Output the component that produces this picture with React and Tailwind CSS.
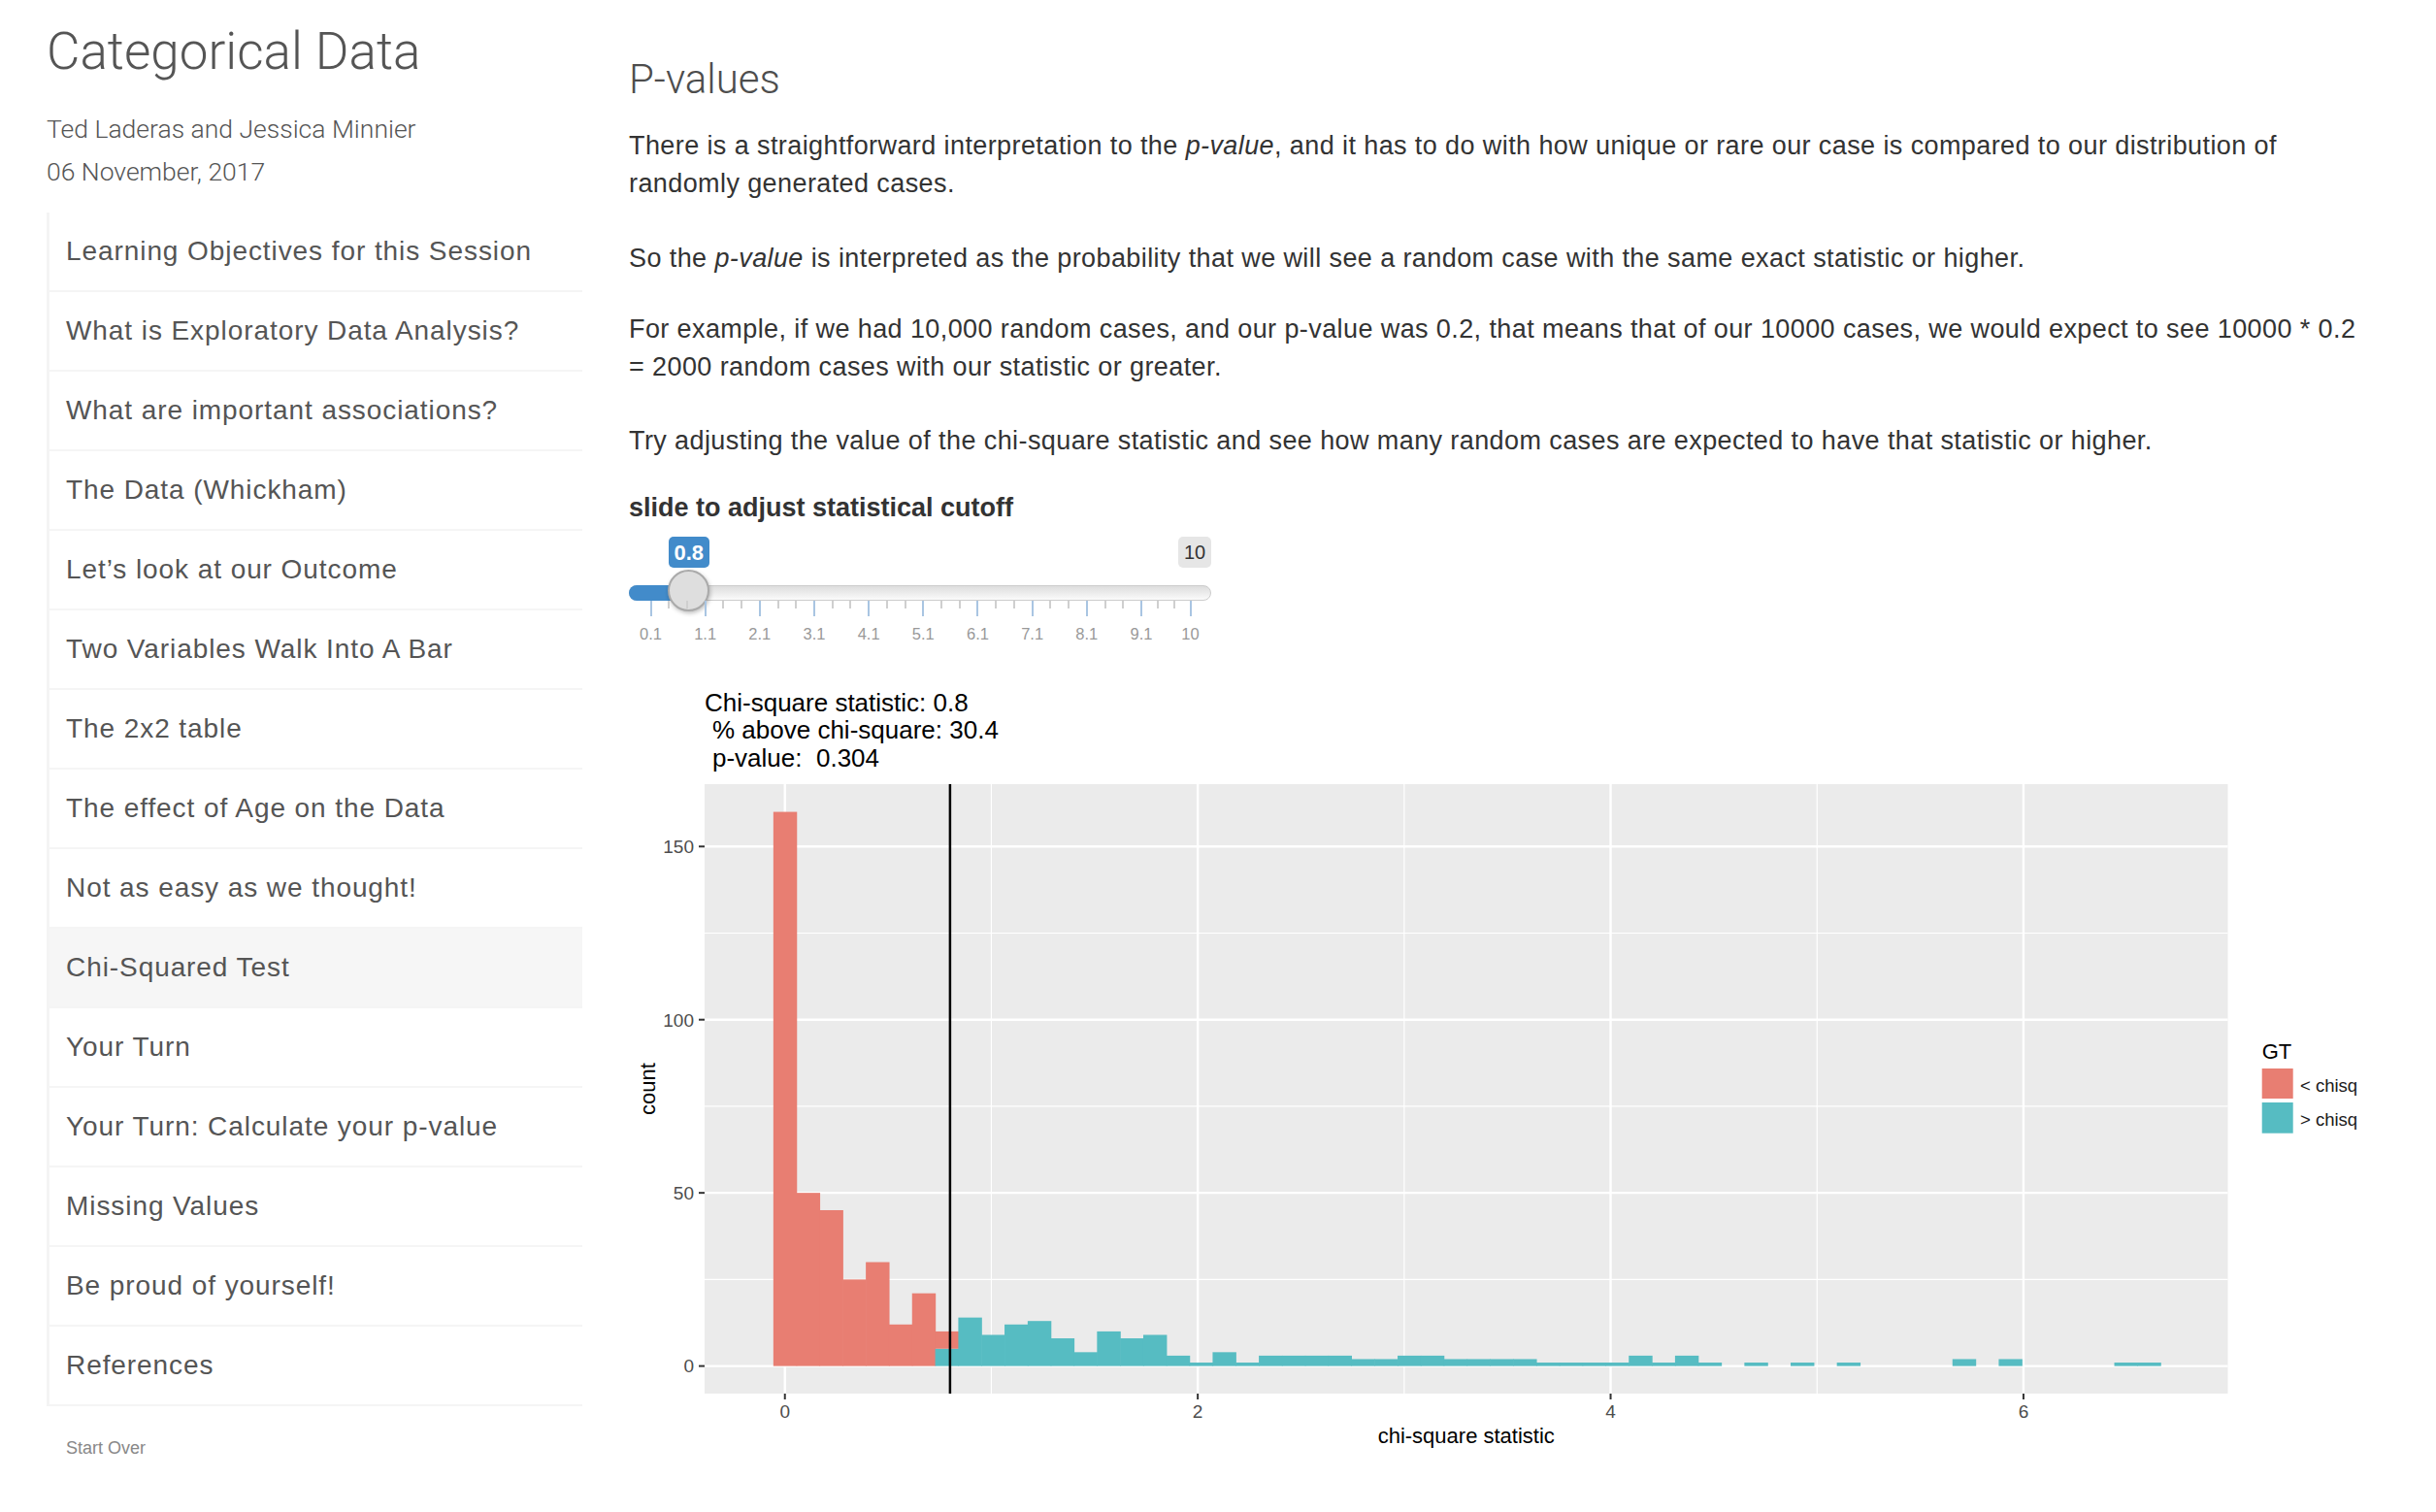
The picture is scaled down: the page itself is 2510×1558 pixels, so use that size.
const navItems = [
  'Learning Objectives for this Session',
  'What is Exploratory Data Analysis?',
  'What are important associations?',
  'The Data (Whickham)',
  'Let\u2019s look at our Outcome',
  'Two Variables Walk Into A Bar',
  'The 2x2 table',
  'The effect of Age on the Data',
  'Not as easy as we thought!',
  'Chi-Squared Test',
  'Your Turn',
  'Your Turn: Calculate your p-value',
  'Missing Values',
  'Be proud of yourself!',
  'References',
];

const activeItem = 'Chi-Squared Test';

const sans = { fontFamily: '"Liberation Sans", Arial, sans-serif' };
const light = { fontFamily: 'Roboto, "Liberation Sans", sans-serif' };

// histogram data (bin width 0.112, bins centred on k * width)
const BIN = 0.112;
const redCounts = [160, 50, 45, 25, 30, 12, 21, 5];
const tealCounts = {
  7: 5, 8: 14, 9: 9, 10: 12, 11: 13, 12: 8, 13: 4, 14: 10, 15: 8, 16: 9,
  17: 3, 18: 1, 19: 4, 20: 1, 21: 3, 22: 3, 23: 3, 24: 3, 25: 2, 26: 2,
  27: 3, 28: 3, 29: 2, 30: 2, 31: 2, 32: 2, 33: 1, 34: 1, 35: 1, 36: 1,
  37: 3, 38: 1, 39: 3, 40: 1, 42: 1, 44: 1, 46: 1, 51: 2, 53: 2, 58: 1, 59: 1,
};

const PANEL = { left: 78, right: 1647.5, top: 129, bottom: 757 };
const X = (u) => 78 + (u + 0.389) * 212.7;
const Y = (c) => 728.6 - c * 3.569;

const RED = '#E87E72';
const TEAL = '#56BCC2';

function Sidebar() {
  return (
    <aside className="w-[552px] shrink-0 flex flex-col">
      <div className="pt-[21px] text-[#555]" style={light}>
        <h1 className="text-[53px] leading-[64px] font-light">Categorical Data</h1>
        <div className="mt-[26px] text-[26.5px] leading-[44px] font-light">
          <p>Ted Laderas and Jessica Minnier</p>
          <p>06 November, 2017</p>
        </div>
      </div>
      <ul className="mt-[20px] border-l-[3px] border-[#f4f4f4]" style={sans}>
        {navItems.map((item) => (
          <li
            key={item}
            className={
              item === activeItem
                ? 'h-[82px] flex items-center pl-[17px] border-b-2 border-[#f5f5f5] bg-[#f6f6f6] text-[28px] text-[#555] tracking-[0.033em]'
                : 'h-[82px] flex items-center pl-[17px] border-b-2 border-[#f5f5f5] text-[28px] text-[#555] tracking-[0.033em]'
            }
          >
            {item}
          </li>
        ))}
      </ul>
      <div className="mt-[30px] pl-[20px] text-[18px] text-[#888]" style={sans}>
        Start Over
      </div>
    </aside>
  );
}

function Slider() {
  const min = 0.1;
  const max = 10;
  const value = 0.8;
  const gridLeft = 22.5;
  const gridWidth = 556;
  const pos = (v) => gridLeft + ((v - min) / (max - min)) * gridWidth;
  const majors = [0.1, 1.1, 2.1, 3.1, 4.1, 5.1, 6.1, 7.1, 8.1, 9.1, 10];
  const minors = [];
  for (let i = 0; i < majors.length - 1; i++) {
    const a = majors[i];
    const b = majors[i + 1];
    minors.push(a + (b - a) / 3, a + ((b - a) * 2) / 3);
  }
  const handle = pos(value);

  return (
    <div className="w-[600px] pt-[10px] pb-[16px] flex flex-col" style={sans}>
      {/* value bubbles */}
      <div className="flex h-[32px]">
        <div
          className="h-[32px] w-[42px] rounded-[5px] bg-[#428bca] text-white text-[22px] font-bold flex items-center justify-center"
          style={{ marginLeft: handle - 21 }}
        >
          0.8
        </div>
        <div className="ml-auto h-[32px] w-[34px] rounded-[5px] bg-[#e6e6e6] text-[#333] text-[20px] flex items-center justify-center">
          10
        </div>
      </div>
      {/* track with handle */}
      <div className="relative mt-[18px] h-[16px] rounded-full border border-[#cccccc] bg-gradient-to-b from-[#dddddd] to-[#fbfbfb]">
        <div className="rounded-l-full bg-[#428bca] -ml-px -mt-px h-[16px]" style={{ width: handle }} />
        <div
          className="absolute top-[-17px] h-[43px] w-[43px] rounded-full border-2 border-[#aaaaaa] bg-[#dedede] shadow-[1px_2px_4px_rgba(0,0,0,0.25)]"
          style={{ left: handle - 22.5 }}
        />
      </div>
      {/* grid */}
      <div className="relative h-[16px]">
        {minors.map((v, i) => (
          <div key={'m' + i} className="absolute top-0 h-[8px] w-[2px] bg-[#cfcfcf]" style={{ left: pos(v) - 1 }} />
        ))}
        {majors.map((v) => (
          <div key={v} className="absolute top-0 h-[16px] w-[2px] bg-[#a9c5e2]" style={{ left: pos(v) - 1 }} />
        ))}
      </div>
      <div className="relative mt-[8px] h-[20px]">
        {majors.map((v) => (
          <div
            key={'l' + v}
            className="absolute top-0 w-[50px] text-center text-[16.5px] leading-[20px] text-[#999]"
            style={{ left: pos(v) - 25 }}
          >
            {v}
          </div>
        ))}
      </div>
    </div>
  );
}

function Histogram() {
  const bars = [];
  for (let k = 0; k < 60; k++) {
    const x0 = X((k - 0.5) * BIN);
    const x1 = X((k + 0.5) * BIN);
    const teal = tealCounts[k] || 0;
    const red = redCounts[k] || 0;
    if (teal > 0) {
      bars.push(<rect key={'t' + k} x={x0} y={Y(teal)} width={x1 - x0 + 0.6} height={Y(0) - Y(teal)} fill={TEAL} />);
    }
    if (red > 0) {
      bars.push(<rect key={'r' + k} x={x0} y={Y(teal + red)} width={x1 - x0 + 0.6} height={Y(teal) - Y(teal + red)} fill={RED} />);
    }
  }
  const majorX = [0, 2, 4, 6];
  const minorX = [1, 3, 5];
  const majorY = [0, 50, 100, 150];
  const minorY = [25, 75, 125];

  return (
    <svg width="1793" height="840" viewBox="0 0 1793 840" className="block" style={sans}>
      <g fontSize="26" fill="#000">
        <text x="78" y="53.5">Chi-square statistic: 0.8</text>
        <text x="86" y="81.5">% above chi-square: 30.4</text>
        <text x="86" y="110.5" style={{ whiteSpace: 'pre' }}>p-value:  0.304</text>
      </g>
      <rect x={PANEL.left} y={PANEL.top} width={PANEL.right - PANEL.left} height={PANEL.bottom - PANEL.top} fill="#EBEBEB" />
      {minorX.map((v) => (
        <line key={'mx' + v} x1={X(v)} x2={X(v)} y1={PANEL.top} y2={PANEL.bottom} stroke="#fff" strokeWidth="1.2" />
      ))}
      {minorY.map((v) => (
        <line key={'my' + v} x1={PANEL.left} x2={PANEL.right} y1={Y(v)} y2={Y(v)} stroke="#fff" strokeWidth="1.2" />
      ))}
      {majorX.map((v) => (
        <line key={'Mx' + v} x1={X(v)} x2={X(v)} y1={PANEL.top} y2={PANEL.bottom} stroke="#fff" strokeWidth="2.4" />
      ))}
      {majorY.map((v) => (
        <line key={'My' + v} x1={PANEL.left} x2={PANEL.right} y1={Y(v)} y2={Y(v)} stroke="#fff" strokeWidth="2.4" />
      ))}
      {bars}
      <line x1={X(0.8)} x2={X(0.8)} y1={PANEL.top} y2={PANEL.bottom} stroke="#000" strokeWidth="2.5" />

      {majorY.map((v) => (
        <g key={'yt' + v}>
          <line x1={PANEL.left - 6} x2={PANEL.left} y1={Y(v)} y2={Y(v)} stroke="#333" strokeWidth="2" />
          <text x={PANEL.left - 11} y={Y(v) + 6.8} textAnchor="end" fontSize="19" fill="#4d4d4d">{v}</text>
        </g>
      ))}
      {majorX.map((v) => (
        <g key={'xt' + v}>
          <line x1={X(v)} x2={X(v)} y1={PANEL.bottom} y2={PANEL.bottom + 6} stroke="#333" strokeWidth="2" />
          <text x={X(v)} y="782" textAnchor="middle" fontSize="19" fill="#4d4d4d">{v}</text>
        </g>
      ))}
      <text x={(PANEL.left + PANEL.right) / 2} y="808" textAnchor="middle" fontSize="22" fill="#000">chi-square statistic</text>
      <text x="26.5" y="443" textAnchor="middle" fontSize="22" fill="#000" transform="rotate(-90 26.5 443)">count</text>

      <text x="1682.7" y="412" fontSize="22" fill="#000">GT</text>
      <rect x="1682.7" y="422" width="32" height="31" fill={RED} />
      <rect x="1682.7" y="457" width="32" height="31.7" fill={TEAL} />
      <text x="1722" y="446" fontSize="18.5" fill="#1a1a1a">{'< chisq'}</text>
      <text x="1722" y="481" fontSize="18.5" fill="#1a1a1a">{'> chisq'}</text>
    </svg>
  );
}

function Main() {
  return (
    <main className="w-[1793px] shrink-0 flex flex-col text-[#333]">
      <h2 className="pt-[58px] text-[42px] leading-[48px] font-light text-[#4d4d4d]" style={light}>
        P-values
      </h2>
      <div className="mt-[25px] text-[27px] leading-[39px] tracking-[0.015em]" style={sans}>
        <p className="mb-[38px]">
          There is a straightforward interpretation to the <em>p-value</em>, and it has to do with how unique or rare our case is compared to our distribution of randomly generated cases.
        </p>
        <p className="mb-[34px]">
          So the <em>p-value</em> is interpreted as the probability that we will see a random case with the same exact statistic or higher.
        </p>
        <p className="mb-[37px]">
          For example, if we had 10,000 random cases, and our p-value was 0.2, that means that of our 10000 cases, we would expect to see 10000 * 0.2 = 2000 random cases with our statistic or greater.
        </p>
        <p className="mb-[30px]">
          Try adjusting the value of the chi-square statistic and see how many random cases are expected to have that statistic or higher.
        </p>
        <p className="font-bold tracking-normal">slide to adjust statistical cutoff</p>
      </div>
      <Slider />
      <Histogram />
    </main>
  );
}

export default function App() {
  return (
    <div className="flex gap-[48px] pl-[48px] min-h-screen bg-white">
      <Sidebar />
      <Main />
    </div>
  );
}
